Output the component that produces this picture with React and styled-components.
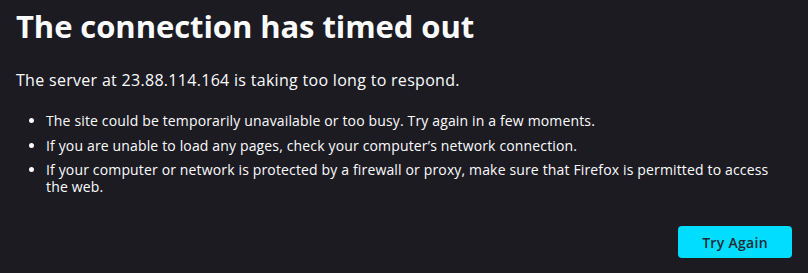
import React from "react";
import styled, { createGlobalStyle } from "styled-components";

const Global = createGlobalStyle`
  html, body { margin: 0; padding: 0; background: #1c1b22; }
  body { font-family: "Open Sans", sans-serif; color: #fbfbfe; }
  * { box-sizing: border-box; }
`;

const Page = styled.div`
  width: 808px;
  height: 273px;
  padding: 0 16px;
  overflow: hidden;
`;

const Title = styled.h1`
  margin: 0;
  padding-top: 6px;
  font-size: 31px;
  line-height: 40px;
  font-weight: 700;
  letter-spacing: -0.08px;
`;

const Intro = styled.p`
  margin: 24px 0 0;
  font-size: 16px;
  line-height: 20px;
  letter-spacing: 0.3px;
`;

const List = styled.ul`
  margin: 22px 0 0;
  padding-left: 30px;
`;

const Item = styled.li`
  font-size: 14px;
  line-height: 17px;
  letter-spacing: 0.15px;
  margin-bottom: 7.5px;
`;

const Actions = styled.div`
  display: flex;
  justify-content: flex-end;
  margin-top: 31px;
`;

const Button = styled.button`
  width: 114px;
  height: 32px;
  border: none;
  border-radius: 4px;
  background: #00ddff;
  color: #1f2a33;
  font-family: inherit;
  font-size: 14px;
  font-weight: 600;
  letter-spacing: 0.3px;
`;

export default function App() {
  return (
    <>
      <Global />
      <Page>
        <Title>The connection has timed out</Title>
        <Intro>The server at 23.88.114.164 is taking too long to respond.</Intro>
        <List>
          <Item>The site could be temporarily unavailable or too busy. Try again in a few moments.</Item>
          <Item>If you are unable to load any pages, check your computer’s network connection.</Item>
          <Item>If your computer or network is protected by a firewall or proxy, make sure that Firefox is permitted to access the web.</Item>
        </List>
        <Actions>
          <Button>Try Again</Button>
        </Actions>
      </Page>
    </>
  );
}
